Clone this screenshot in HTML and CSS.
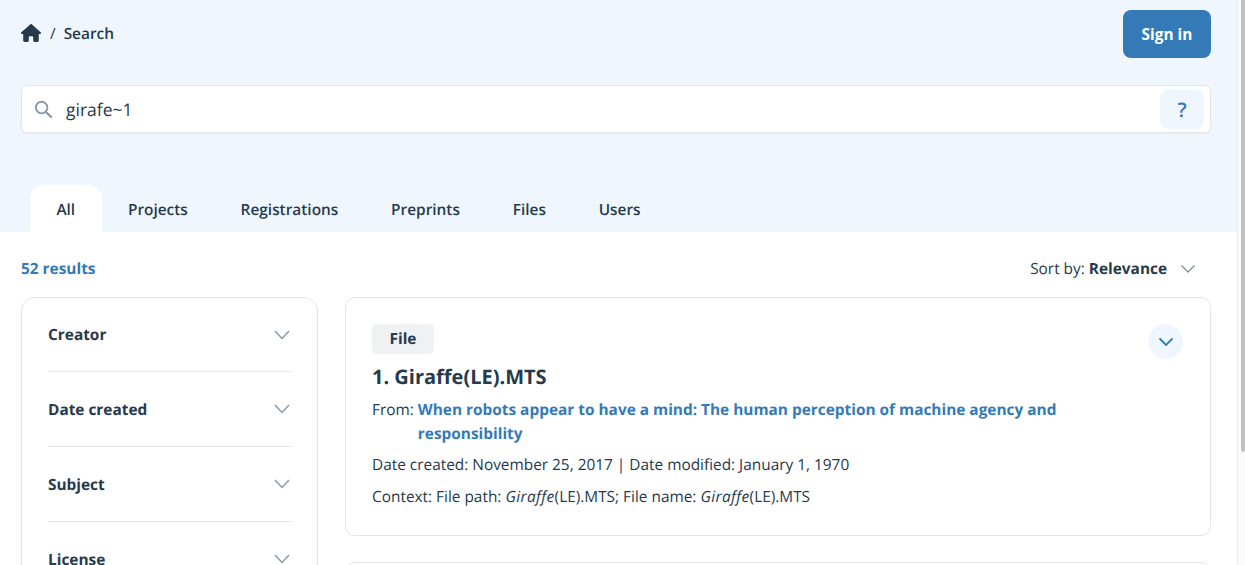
FILE: index.html
```html
<!DOCTYPE html>
<html lang="en">
<head>
<meta charset="utf-8">
<title>Search</title>
<link rel="stylesheet" href="styles.css">
</head>
<body>
<div class="page">
  <div class="content">
    <header class="hero">
      <div class="topbar">
        <nav class="crumbs">
          <svg class="home" viewBox="0 0 576 512"><path fill="currentColor" d="M575.800 255.500c0 18-15 32.100-32 32.100h-32l.7 160.200c0 2.700-.2 5.400-.5 8.100V472c0 22.100-17.900 40-40 40H456c-1.100 0-2.200 0-3.300-.1c-1.400 .1-2.800 .1-4.200 .1H392c-22.100 0-40-17.900-40-40V384c0-17.700-14.300-32-32-32H256c-17.700 0-32 14.300-32 32v88c0 22.100-17.900 40-40 40H128.100c-1.500 0-3-.1-4.500-.2c-1.200 .1-2.400 .2-3.600 .2H104c-22.100 0-40-17.900-40-40V360c0-.9 0-1.900 .1-2.800V287.600H32c-18 0-32-14-32-32.100c0-9 3-17 10-24L266.400 8c7-7 15-8 22-8s15 2 21 7L564.800 231.500c8 7 12 15 11 24z"/></svg>
          <span class="slash">/</span>
          <span>Search</span>
        </nav>
        <button class="signin">Sign in</button>
      </div>
      <div class="searchbox">
        <svg class="lens" viewBox="0 0 20 20"><circle cx="8" cy="8" r="6.100" fill="none" stroke="currentColor" stroke-width="2"/><path d="M12.600 12.600 18 18" fill="none" stroke="currentColor" stroke-width="2.300" stroke-linecap="round"/></svg>
        <span class="query">girafe~1</span>
        <span class="help">?</span>
      </div>
      <div class="tabs">
        <span class="tab active">All</span>
        <span class="tab">Projects</span>
        <span class="tab">Registrations</span>
        <span class="tab">Preprints</span>
        <span class="tab">Files</span>
        <span class="tab">Users</span>
      </div>
    </header>
    <main class="results">
      <div class="resultbar">
        <span class="count">52 results</span>
        <span class="sort">Sort by: <b>Relevance</b>
          <svg class="chev sortchev" viewBox="0 0 16 10"><path d="M1.500 1.500 8 8l6.500-6.500"/></svg>
        </span>
      </div>
      <div class="columns">
        <aside class="filters">
          <div class="filter"><span>Creator</span><svg class="chev" viewBox="0 0 16 10"><path d="M1 1 8 8.500l7-7.500"/></svg></div>
          <div class="filter"><span>Date created</span><svg class="chev" viewBox="0 0 16 10"><path d="M1 1 8 8.500l7-7.500"/></svg></div>
          <div class="filter"><span>Subject</span><svg class="chev" viewBox="0 0 16 10"><path d="M1 1 8 8.500l7-7.500"/></svg></div>
          <div class="filter"><span>License</span><svg class="chev" viewBox="0 0 16 10"><path d="M1 1 8 8.500l7-7.500"/></svg></div>
        </aside>
        <section class="list">
          <article class="card">
            <button class="expand"><svg viewBox="0 0 16 10"><path d="M1.500 1.500 8 8l6.500-6.500"/></svg></button>
            <span class="badge">File</span>
            <h2 class="title">1. Giraffe(LE).MTS</h2>
            <div class="from"><span class="fromlabel">From:</span><a class="fromlink">When robots appear to have a mind: The human perception of machine agency and responsibility</a></div>
            <p class="meta first">Date created: November 25, 2017 | Date modified: January 1, 1970</p>
            <p class="meta">Context: File path: <em>Giraffe</em>(LE).MTS; File name: <em>Giraffe</em>(LE).MTS</p>
          </article>
          <article class="card"></article>
        </section>
      </div>
    </main>
  </div>
  <div class="scrollbar"></div>
</div>
</body>
</html>
```
FILE: styles.css
```css
* { box-sizing: border-box; }
html, body { margin: 0; padding: 0; height: 100%; overflow: hidden; }
body { font-family: "Open Sans", sans-serif; color: #263a4d; font-size: 15.400px; background: #fff; text-rendering: geometricPrecision; }
.page { display: flex; height: 565px; overflow: hidden; }
.content { width: 1238px; flex: none; border-right: 1px solid #ececec; }
.scrollbar { flex: 1; background: #fafafa; position: relative; }
.scrollbar::after { content: ""; position: absolute; left: 3px; top: 0; height: 452px; width: 4px; background: #c1c1c1; border-radius: 0 0 2px 2px; }
.hero { height: 232px; background: #eff6fd; padding: 10px 26px 0 21px; display: flex; flex-direction: column; }
.topbar { display: flex; justify-content: space-between; height: 48px; }
.crumbs { display: flex; align-items: center; height: 46px; font-weight: 600; }
.home { width: 20px; height: 18px; }
.slash { margin: 0 8px 0 9px; font-weight: 400; }
.signin { width: 88px; height: 48px; background: #337ab7; color: #fff; border: 0; border-radius: 8px; font: 700 15.400px "Open Sans", sans-serif; }
.searchbox { margin-top: 27px; height: 48px; background: #fff; border: 1px solid #e3e5e8; border-radius: 6px; display: flex; align-items: center; padding: 0 6px 0 12px; box-shadow: 0 1px 2px rgba(0,0,0,.05); }
.lens { width: 19px; height: 19px; color: #8a99a6; }
.query { font-size: 17.500px; margin-left: 13px; padding-top: 1px; flex: 1; }
.help { width: 44px; height: 39px; background: #eff6fd; border-radius: 8px; color: #337ab7; font-size: 20px; font-weight: 600; display: flex; align-items: center; justify-content: center; }
.tabs { margin-top: 52px; margin-left: 9px; display: flex; height: 47px; }
.tab { display: flex; align-items: center; padding: 2px 26.400px 0; font-weight: 600; border-radius: 14px 14px 0 0; }
.tab.active { background: #fff; }
.results { padding: 0 26px 0 21px; }
.resultbar { height: 65px; display: flex; justify-content: space-between; align-items: center; padding-top: 8px; padding-bottom: 0; }
.count { color: #337ab7; font-weight: 700; }
.sort { display: flex; align-items: center; white-space: pre; padding-right: 15px; }
.sort b { font-weight: 700; }
.chev { width: 16px; height: 10px; }
.chev path { fill: none; stroke: #8a99a6; stroke-width: 1.500; }
.sortchev { margin-left: 13px; }
.columns { display: flex; gap: 27px; align-items: flex-start; }
.filters { width: 297px; flex: none; height: 400px; border: 1px solid #e3e5e8; border-radius: 14px; padding: 0 26px; }
.filter { height: 75px; display: flex; justify-content: space-between; align-items: center; font-weight: 700; border-bottom: 1px solid #e3e5e8; padding-right: 1px; }
.filter:first-child { height: 74px; }
.list { flex: 1; display: flex; flex-direction: column; gap: 26px; }
.card { position: relative; border: 1px solid #e3e5e8; border-radius: 10px; padding: 26px; height: 239px; }
.expand { position: absolute; top: 26px; right: 27px; width: 35px; height: 35px; border: 0; border-radius: 50%; background: #eff6fd; padding: 0; display: flex; align-items: center; justify-content: center; }
.expand svg { width: 16px; height: 10px; }
.expand path { fill: none; stroke: #337ab7; stroke-width: 1.800; }
.badge { display: inline-flex; align-items: center; justify-content: center; width: 62px; height: 30px; padding-bottom: 2px; background: #eff1f3; border-radius: 5px; font-weight: 700; }
.title { margin: 9px 0 8px; font-size: 20px; line-height: 27px; font-weight: 700; }
.from { display: flex; line-height: 24px; }
.fromlabel { margin-right: 4px; flex: none; }
.fromlink { color: #337ab7; font-weight: 700; width: 660px; }
.meta { margin: 8px 0 0; line-height: 24px; }
.meta.first { margin-top: 7px; }
.meta em { letter-spacing: .4px; }
```
